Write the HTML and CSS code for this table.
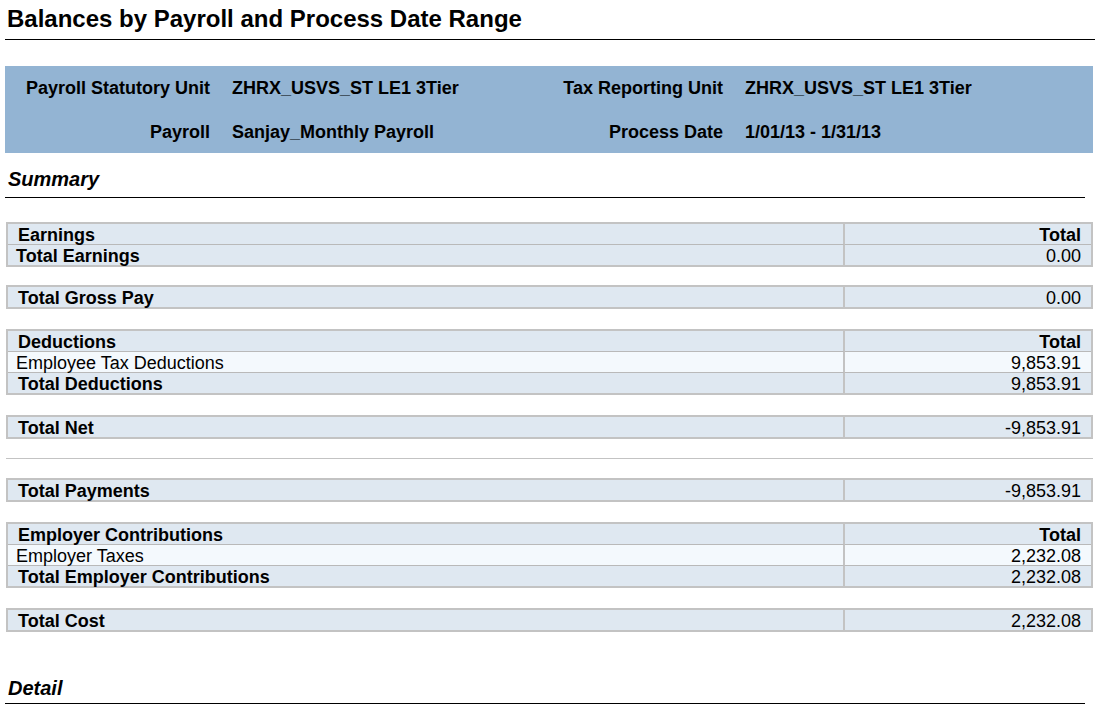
FILE: index.html
```html
<!DOCTYPE html>
<html>
<head>
<meta charset="utf-8">
<title>Balances by Payroll and Process Date Range</title>
<link rel="stylesheet" href="styles.css">
</head>
<body>
<div class="page">
  <h1 class="title">Balances by Payroll and Process Date Range</h1>

  <div class="params">
    <div class="plabel">Payroll Statutory Unit</div>
    <div class="pvalue">ZHRX_USVS_ST LE1 3Tier</div>
    <div class="plabel">Tax Reporting Unit</div>
    <div class="pvalue">ZHRX_USVS_ST LE1 3Tier</div>
    <div class="plabel">Payroll</div>
    <div class="pvalue">Sanjay_Monthly Payroll</div>
    <div class="plabel">Process Date</div>
    <div class="pvalue">1/01/13 - 1/31/13</div>
  </div>

  <h2 class="section summary">Summary</h2>

  <div class="tables">
    <table class="bal">
      <tr class="head"><td class="name">Earnings</td><td class="amt">Total</td></tr>
      <tr class="tot"><td class="name narrow">Total Earnings</td><td class="amt reg">0.00</td></tr>
    </table>

    <table class="bal pull">
      <tr class="tot"><td class="name">Total Gross Pay</td><td class="amt reg">0.00</td></tr>
    </table>

    <table class="bal">
      <tr class="head"><td class="name">Deductions</td><td class="amt">Total</td></tr>
      <tr class="line"><td class="name narrow">Employee Tax Deductions</td><td class="amt reg">9,853.91</td></tr>
      <tr class="tot"><td class="name">Total Deductions</td><td class="amt reg">9,853.91</td></tr>
    </table>

    <table class="bal">
      <tr class="tot"><td class="name">Total Net</td><td class="amt reg">-9,853.91</td></tr>
    </table>

    <div class="sep"></div>

    <table class="bal">
      <tr class="tot"><td class="name">Total Payments</td><td class="amt reg">-9,853.91</td></tr>
    </table>

    <table class="bal">
      <tr class="head"><td class="name">Employer Contributions</td><td class="amt">Total</td></tr>
      <tr class="line"><td class="name narrow">Employer Taxes</td><td class="amt reg">2,232.08</td></tr>
      <tr class="tot"><td class="name">Total Employer Contributions</td><td class="amt reg">2,232.08</td></tr>
    </table>

    <table class="bal">
      <tr class="tot"><td class="name">Total Cost</td><td class="amt reg">2,232.08</td></tr>
    </table>
  </div>

  <h2 class="section detail">Detail</h2>
</div>
</body>
</html>
```

FILE: styles.css
```css
html, body {
  margin: 0;
  padding: 0;
  background: #ffffff;
}

body {
  font-family: "Liberation Sans", Arial, sans-serif;
  color: #000000;
}

.page {
  padding: 5px 0 0 5px;
  width: 1090px;
}

.title {
  margin: 0;
  padding: 0 0 6px 2px;
  font-size: 24px;
  line-height: 28px;
  font-weight: bold;
  border-bottom: 1px solid #000000;
  width: 1088px;
}

.params {
  margin-top: 26px;
  width: 1088px;
  height: 87px;
  background: #93b4d3;
  display: grid;
  grid-template-columns: 205px 250px 219px 1fr;
  grid-template-rows: 45px 42px;
  column-gap: 22px;
  align-items: center;
  font-size: 18px;
  font-weight: bold;
  white-space: nowrap;
}

.plabel {
  text-align: right;
}

.pvalue {
  text-align: left;
}

.section {
  margin: 0;
  font-size: 20px;
  line-height: 24px;
  font-weight: bold;
  font-style: italic;
  padding-left: 3px;
  border-bottom: 1px solid #000000;
  width: 1077px;
}

.summary {
  margin-top: 14px;
  padding-bottom: 6px;
}

.detail {
  margin-top: 44px;
  padding-bottom: 3px;
}

.tables {
  margin-top: 24px;
  padding-left: 1px;
  display: flex;
  flex-direction: column;
  gap: 20px;
}

.bal {
  width: 1087px;
  table-layout: fixed;
  border-collapse: separate;
  border-spacing: 0;
  border: 2px solid #c3c3c3;
  font-size: 18px;
  line-height: 18px;
}

.bal.pull {
  margin-top: -2px;
}

.bal td {
  padding: 2px 0 0 0;
  height: 18px;
  white-space: nowrap;
  background: #dfe8f1;
}

.bal tr + tr td {
  border-top: 1px solid #b9b9b9;
}

.bal td.name {
  padding-left: 10px;
  border-right: 2px solid #c3c3c3;
  font-weight: bold;
  box-sizing: border-box;
  width: 837px;
}

.bal td.name.narrow {
  padding-left: 8px;
}

.bal tr.line td {
  background: #f4f9fd;
}

.bal tr.line td.name {
  font-weight: normal;
}

.bal td.amt {
  text-align: right;
  padding-right: 10px;
  font-weight: bold;
}

.bal td.amt.reg {
  font-weight: normal;
}

.sep {
  height: 1px;
  background: #c3c3c3;
  width: 1087px;
  margin: -1px 0;
}
```
